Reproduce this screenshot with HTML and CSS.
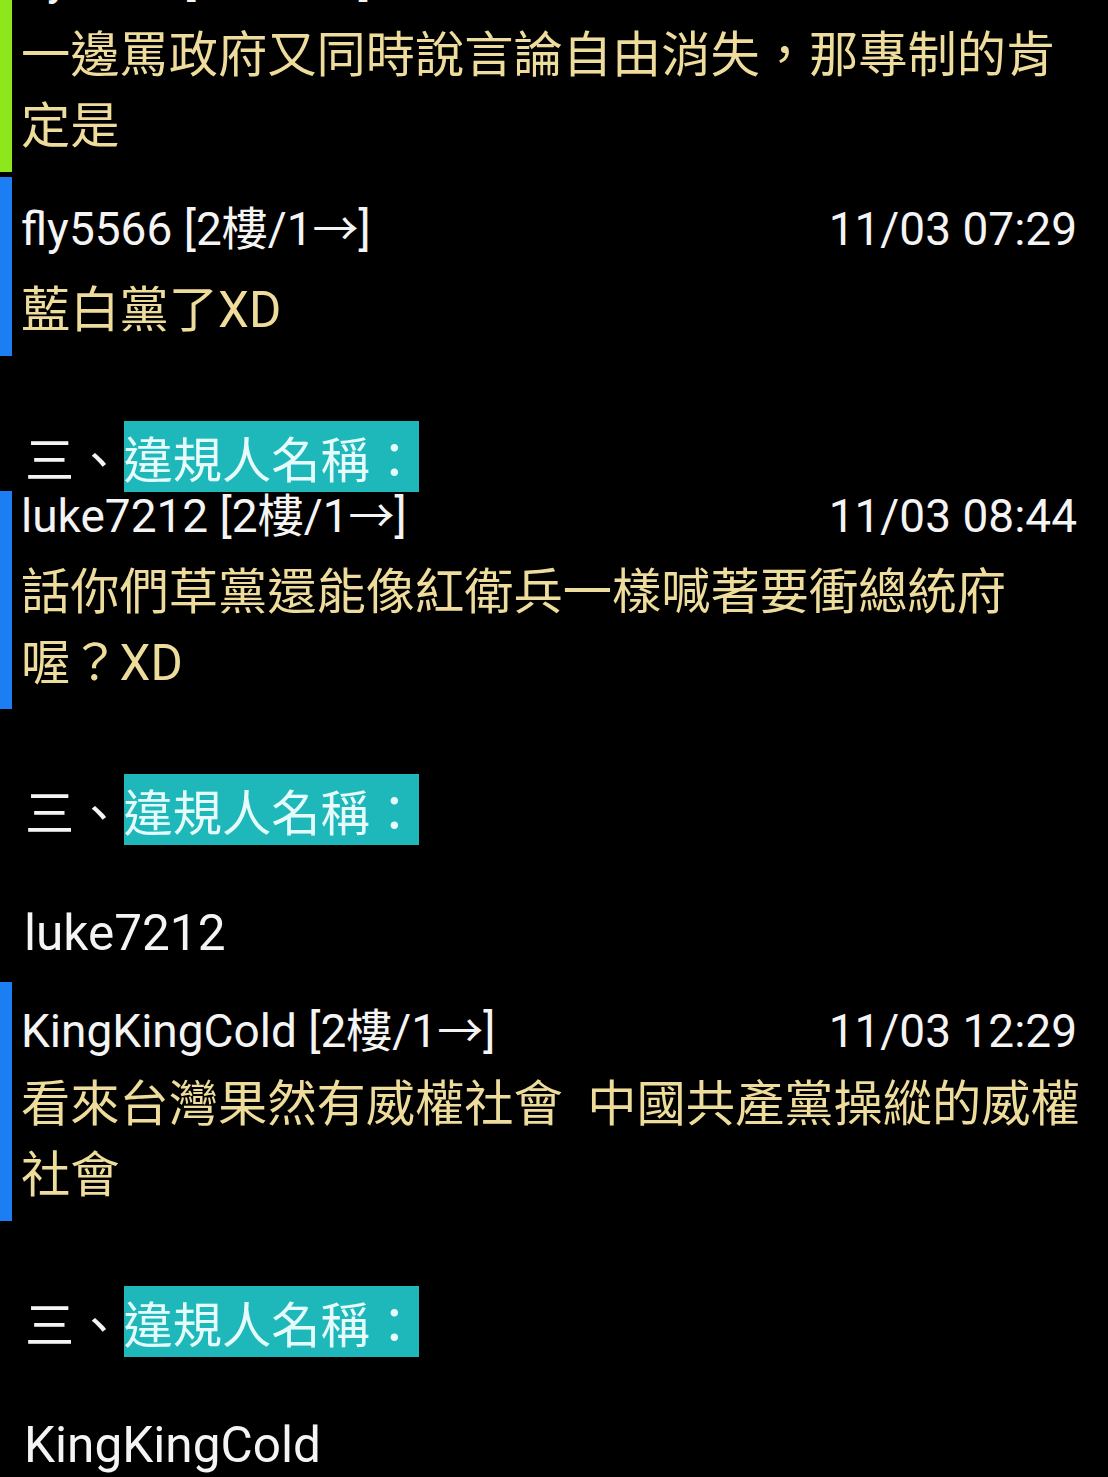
FILE: index.html
```html
<!DOCTYPE html>
<html lang="zh-Hant">
<head>
<meta charset="utf-8">
<title>推文</title>
<link rel="stylesheet" href="styles.css">
</head>
<body>
<div class="feed">
  <div class="push push-green">
    <div class="push-head"><span class="who">fly5566 [1樓/2→]</span><span class="time">11/03 07:12</span></div>
    <div class="push-body">一邊罵政府又同時說言論自由消失，那專制的肯<br>定是</div>
  </div>

  <div class="push push-blue push-roomy">
    <div class="push-head"><span class="who">fly5566 [2樓/1→]</span><span class="time">11/03 07:29</span></div>
    <div class="push-body">藍白黨了XD</div>
  </div>

  <div class="art">三、<span class="mark">違規人名稱：</span></div>

  <div class="push push-blue push-tight">
    <div class="push-head"><span class="who">luke7212 [2樓/1→]</span><span class="time">11/03 08:44</span></div>
    <div class="push-body">話你們草黨還能像紅衛兵一樣喊著要衝總統府<br>喔？XD</div>
  </div>

  <div class="art">三、<span class="mark">違規人名稱：</span></div>
  <div class="name-line">luke7212</div>

  <div class="push push-blue push-snug">
    <div class="push-head"><span class="who">KingKingCold [2樓/1→]</span><span class="time">11/03 12:29</span></div>
    <div class="push-body">看來台灣果然有威權社會&nbsp;&nbsp;中國共產黨操縱的威權<br>社會</div>
  </div>

  <div class="art">三、<span class="mark">違規人名稱：</span></div>
  <div class="name-line">KingKingCold</div>
</div>
</body>
</html>
```

FILE: styles.css
```css
html, body {
  margin: 0;
  padding: 0;
  background: #000;
}

body {
  width: 1108px;
  height: 1477px;
  overflow: hidden;
  font-family: Roboto, "Noto Sans CJK TC", "Noto Sans CJK SC", sans-serif;
  color: #f2f2f2;
}

.feed {
  margin-top: -70px;
  display: flex;
  flex-direction: column;
}

.push {
  border-left: 12px solid #1b7ef2;
  padding: 24px 31px 10px 9px;
}

.push-green {
  border-left-color: #8ee61c;
}

.push-green + .push-blue {
  margin-top: 5px;
}

.push-head {
  display: flex;
  justify-content: space-between;
  align-items: baseline;
  font-size: 46px;
  line-height: 50px;
  color: #f4f4f4;
  white-space: nowrap;
}

.push-body {
  margin-top: 16px;
  font-size: 49.25px;
  line-height: 71px;
  color: #eedc9c;
  white-space: nowrap;
}

/* spacing variants of the comment blocks */
.push-roomy {
  padding-top: 27px;
}

.push-roomy .push-body {
  margin-top: 21px;
}

.push-tight {
  padding-top: 0;
}

.push-snug {
  margin-top: 13px;
}

.push-snug .push-body {
  margin-top: 13px;
}

.art {
  margin-top: 67px;
  padding-left: 25px;
  font-family: "Noto Sans CJK TC", "Noto Sans CJK SC", sans-serif;
  font-size: 49.25px;
  line-height: 68px;
  color: #f4f4f4;
  white-space: nowrap;
}

.mark {
  background: #1fb8ba;
  color: #e6fbfb;
}

.name-line {
  margin-top: 54px;
  padding-left: 24px;
  font-size: 49.5px;
  line-height: 71px;
  color: #f4f4f4;
  white-space: nowrap;
}
```
